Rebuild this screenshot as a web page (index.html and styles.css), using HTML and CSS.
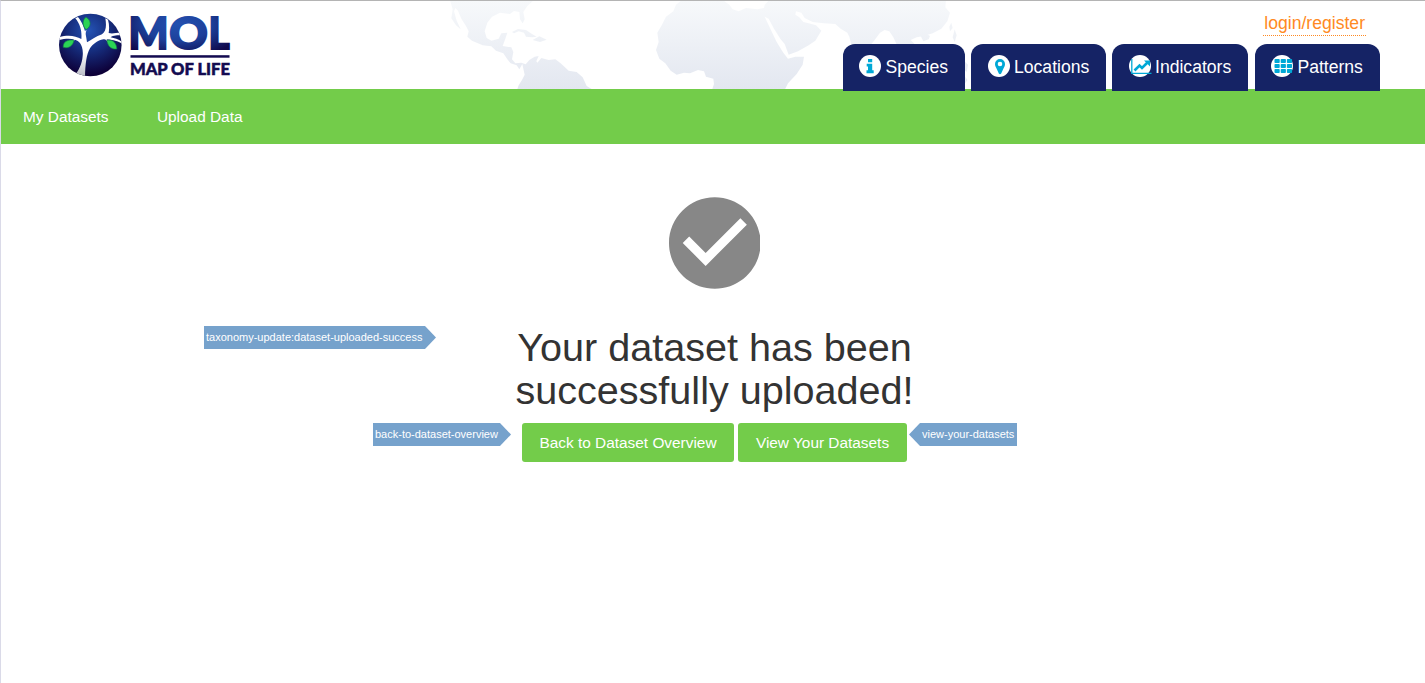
FILE: index.html
```html
<!DOCTYPE html>
<html lang="en">
<head>
<meta charset="utf-8">
<title>Map of Life</title>
<link rel="stylesheet" href="styles.css">
</head>
<body>
<div class="page">
  <header class="header">
    <svg class="world" viewBox="440 1 540 88" width="540" height="88" aria-hidden="true">
      <defs>
        <linearGradient id="land" gradientUnits="userSpaceOnUse" x1="0" y1="0" x2="0" y2="267">
          <stop offset="0" stop-color="#f7f9fb"/><stop offset="1" stop-color="#e3e7f0"/>
        </linearGradient>
      </defs>
      <g fill="url(#land)" transform="translate(440) scale(.33333)">
        <path d="M30 0L38 28 34 55 48 76 62 88 50 62 42 34 46 24 54 32 64 56 78 78 86 94 82 110 96 122 128 136 154 139 168 152 190 160 202 178 212 190 230 196 238 208 247 192 250 206 254 224 246 240 236 256 231 270H460L440 258 428 232 410 216 386 212 362 190 346 178 326 180 304 174 292 188 289 184 296 168 284 170 268 180 257 193 244 188 226 190 216 178 220 156 214 142 188 138 196 116 202 98 184 100 176 116 154 122 140 114 134 94 142 68 156 50 180 38 210 42 222 33 238 36 240 58 248 70 254 58 250 36 262 18 278 4V0Z"/>
        <path d="M216 96L234 87 258 90 276 102 290 110 276 112 258 110 252 98 236 94 222 100ZM278 120L298 109 320 119 300 126Z"/>
      </g>
      <g fill="url(#land)" transform="translate(640) scale(.33333)">
        <path d="M126 0L108 14 100 34 78 50 66 74 52 98 56 126 48 150 58 176 76 190 92 212 110 224 132 218 150 220 174 210 192 214 198 230 220 236 222 252 216 270H434L444 250 470 222 488 194 492 170 466 170 444 176 430 158 410 126 390 84 374 50 386 56 402 86 422 118 434 132 446 164 474 154 506 136 526 122 544 92 528 76 506 70 490 66 478 52 466 44 468 34 484 38 494 54 518 66 552 70 586 72 602 86 622 98 628 110 636 142H686L704 120 720 98 734 90 748 94 760 112 774 142 790 132 826 134 812 120 830 112 852 108 878 100 904 86 922 64 930 38 916 22 918 0H388L374 14 372 24 352 28 318 24 296 34 278 28 268 14 248 0Z"/>
        <path d="M842 108L856 100 870 108 866 118 850 124ZM934 68L938 84 930 94 928 80ZM944 88L950 106 944 126 938 112ZM948 142L958 162 950 176ZM972 182L984 194 980 216 972 208ZM976 230L982 240 976 250Z"/>
      </g>
    </svg>

    <a class="logo" href="#" aria-label="Map of Life">
      <svg viewBox="50 5 190 80" width="190" height="80">
        <defs>
          <radialGradient id="globe" cx="48%" cy="27%" r="70%">
            <stop offset="0" stop-color="#2453b4"/><stop offset=".45" stop-color="#162f80"/><stop offset="1" stop-color="#0d0038"/>
          </radialGradient>
          <radialGradient id="word" gradientUnits="userSpaceOnUse" cx="0" cy="0" r="1" gradientTransform="translate(178 24) scale(66 34)">
            <stop offset="0" stop-color="#2450b0"/><stop offset=".5" stop-color="#1c409a"/><stop offset="1" stop-color="#10094c"/>
          </radialGradient>
          <linearGradient id="trunk" gradientUnits="userSpaceOnUse" x1="0" y1="20" x2="0" y2="195">
            <stop offset="0" stop-color="#fff"/><stop offset=".6" stop-color="#fff"/><stop offset="1" stop-color="#b9bcc6"/>
          </linearGradient>
          <clipPath id="disc"><circle cx="90.3" cy="45" r="31.3"/></clipPath>
        </defs>
        <circle cx="90.3" cy="45" r="31.3" fill="url(#globe)"/>
        <g clip-path="url(#disc)">
          <g transform="translate(56 11) scale(.33333)">
            <path fill="url(#trunk)" d="M50 200C68 180 78 160 80 135C82 118 78 104 72 96C60 82 35 80 5 88V80C35 70 58 74 76 84C78 62 74 42 58 22L66 18C82 38 89 60 93 94C104 88 120 76 138 70C150 62 152 46 148 22L156 26C160 40 160 54 158 66C170 70 184 64 200 66V72C186 74 172 72 164 79C176 82 188 84 200 94V99C182 88 160 84 142 85C124 88 110 100 102 112C91 130 88 160 87 200Z"/>
            <path d="M90 58L84 76M60 84L48 90M144 82Q154 84 156 94" fill="none" stroke="#fff" stroke-width="3"/>
          </g>
        </g>
        <g fill="#2bd455" stroke="#118044" stroke-width=".6">
          <path d="M86 29.500C81.500 25 83 19 86 17.300C91.500 20 91.500 27 86 29.500Z"/>
          <path d="M63.200 47.300C63 42 67 39.500 74 40.200C73 46 68 49 63.200 47.300Z"/>
          <path d="M107 40.200C113 39.500 116.500 43 116.800 49C111 49.500 107.500 46 107 40.200Z"/>
        </g>
        <g class="logo-word" fill="url(#word)" stroke="url(#word)" stroke-width="2">
          <text x="128.500" y="48.600" textLength="40" lengthAdjust="spacingAndGlyphs">M</text>
          <text x="169.200" y="48.600" textLength="38.500" lengthAdjust="spacingAndGlyphs">O</text>
          <text x="208.500" y="48.600" textLength="21" lengthAdjust="spacingAndGlyphs">L</text>
        </g>
        <rect x="130.500" y="55.200" width="99" height="2.500" fill="#130b50"/>
        <text class="logo-sub" x="129.900" y="74.600" textLength="100" lengthAdjust="spacingAndGlyphs">MAP OF LIFE</text>
      </svg>
    </a>

    <div class="account">
      <a class="login" href="#">login/register</a>
      <nav class="tabs">
        <a class="tab species" href="#">
          <svg class="icon" viewBox="0 0 22 22"><circle cx="11" cy="11" r="11" fill="#fff"/><path fill="#00a8d6" d="M9 4h4.200v3.200H9ZM7.700 8.800H13.200v6.500h1.500V18.200h-7.200v-2.900H9V11.500H7.700Z"/></svg>
          <span>Species</span></a>
        <a class="tab locations" href="#">
          <svg class="icon" viewBox="0 0 22 22"><circle cx="11" cy="11" r="11" fill="#fff"/><path fill="#00a8d6" fill-rule="evenodd" d="M12 4A5 5 0 0 0 7 9C7 11 8 12.500 9 14.500L10.800 18.500Q12 20 13.200 18.500L15 14.500C16 12.500 17 11 17 9A5 5 0 0 0 12 4ZM12 6.700A2.300 2.300 0 1 1 12 11.300A2.300 2.300 0 1 1 12 6.700Z"/></svg>
          <span>Locations</span></a>
        <a class="tab indicators" href="#">
          <svg class="icon" viewBox="0 0 22 22"><circle cx="11" cy="11" r="11" fill="#fff"/><path d="M2.800 4V18.400H22.500" fill="none" stroke="#00a8d6" stroke-width="1.300"/><path d="M5.500 15.500L10.500 10.500 13 13 18.500 7.500" fill="none" stroke="#00a8d6" stroke-width="2.600"/><path fill="#00a8d6" d="M15 5.500H21V11.500Z"/></svg>
          <span>Indicators</span></a>
        <a class="tab patterns" href="#">
          <svg class="icon" viewBox="0 0 22 22"><circle cx="11" cy="11" r="11" fill="#fff"/><g fill="#00a8d6"><rect x="3.500" y="4" width="5.200" height="4" rx=".8"/><rect x="9.700" y="4" width="5.200" height="4" rx=".8"/><rect x="15.900" y="4" width="5.200" height="4" rx=".8"/><rect x="3.500" y="9" width="5.200" height="4" rx=".8"/><rect x="9.700" y="9" width="5.200" height="4" rx=".8"/><rect x="15.900" y="9" width="5.200" height="4" rx=".8"/><rect x="3.500" y="14" width="5.200" height="4" rx=".8"/><rect x="9.700" y="14" width="5.200" height="4" rx=".8"/><rect x="15.900" y="14" width="5.200" height="4" rx=".8"/></g></svg>
          <span>Patterns</span></a>
      </nav>
    </div>
  </header>

  <nav class="subnav">
    <a href="#">My Datasets</a>
    <a href="#">Upload Data</a>
  </nav>

  <main class="result">
    <svg class="check" viewBox="2 2 20 20"><path fill="#878787" d="M12 2C6.480 2 2 6.480 2 12s4.480 10 10 10 10-4.480 10-10S17.520 2 12 2zm-2 15l-5-5 1.410-1.410L10 14.170l7.590-7.590L19 8l-9 9z"/></svg>
    <div class="message">
      <h1>Your dataset has been<br>successfully uploaded!</h1>
      <span class="tag right tag-title">taxonomy-update:dataset-uploaded-success</span>
    </div>
    <div class="actions">
      <a class="button overview" href="#">Back to Dataset Overview</a>
      <a class="button datasets" href="#">View Your Datasets</a>
      <span class="tag right tag-overview">back-to-dataset-overview</span>
      <span class="tag left tag-datasets">view-your-datasets</span>
    </div>
  </main>
</div>
</body>
</html>
```
FILE: styles.css
```css
* { box-sizing: border-box; }

body {
  margin: 0;
  background: #fff;
  color: #333;
  font-family: "Liberation Sans", Arial, sans-serif;
  font-size: 15.4px;
}

a { color: inherit; text-decoration: none; }

.page {
  height: 683px;
  border-top: 1px solid #b4b4b4;
  border-left: 1px solid #dadae8;
  overflow: hidden;
}

.header {
  position: relative;
  display: flex;
  justify-content: space-between;
  height: 88px;
}

/* Decorative map behind the header */
.world { position: absolute; left: 439px; top: 0; }

.logo { position: relative; padding: 4px 0 0 49px; }
.logo svg { display: block; }
.logo-word { font: 900 44.500px Lato, sans-serif; }
.logo-sub { font: 900 16px Lato, sans-serif; fill: #130b50; stroke: #130b50; stroke-width: .5px; }

.account {
  position: relative;
  display: flex;
  flex-direction: column;
  align-items: flex-end;
  padding: 11px 45px 0 0;
}

.login {
  flex: none;
  height: 24px;
  margin-right: 14px;
  padding: 0 1px;
  border-bottom: 1px dotted #ff8a22;
  color: #ff8a22;
  font-size: 17.6px;
  line-height: 22px;
}

.tabs { display: flex; flex: none; gap: 6px; margin-top: 8px; }

.tab {
  display: flex;
  align-items: flex-start;
  gap: 4.4px;
  height: 47px;
  padding: 11px 0 0 16px;
  border-radius: 12px 12px 0 0;
  background: #152365;
  color: #fff;
  font-size: 17.6px;
  line-height: 24px;
}
.species { width: 122px; }
.locations { width: 135px; gap: 4px; padding-left: 17px; }
.indicators { width: 136px; gap: 4px; padding-left: 17px; }
.patterns { width: 125px; margin-left: 1px; }
.icon { flex: none; width: 22px; height: 22px; overflow: visible; }

.subnav {
  display: flex;
  gap: 48.4px;
  height: 55px;
  padding-left: 22px;
  background: #73cc4a;
  color: #fff;
  line-height: 56px;
}

.result {
  display: flex;
  flex-direction: column;
  align-items: center;
  padding-top: 53px;
}
.check { width: 91.600px; height: 92px; margin-left: 3.400px; }

.message { position: relative; width: 399px; margin-top: 37px; margin-left: 3px; }
h1 {
  margin: 0;
  font-size: 39.6px;
  font-weight: 400;
  line-height: 43px;
  text-align: center;
  white-space: nowrap;
}

.actions { position: relative; display: flex; gap: 4px; margin: 11px 0 0 3px; }
.button {
  height: 39px;
  border-radius: 3px;
  background: #73cc4a;
  color: #fff;
  line-height: 40px;
  text-align: center;
}
.overview { width: 212px; }
.datasets { width: 169px; }

/* Annotation labels pointing at the items beside them */
.tag {
  position: absolute;
  height: 23px;
  background: #76a2cc;
  color: #fff;
  font-size: 11px;
  line-height: 23px;
  white-space: nowrap;
}
.right { padding-left: 2px; clip-path: polygon(0 0, calc(100% - 11px) 0, 100% 50%, calc(100% - 11px) 100%, 0 100%); }
.left { padding-left: 13px; clip-path: polygon(11px 0, 100% 0, 100% 100%, 11px 100%, 0 50%); }
.tag-title { left: -311px; top: 0; width: 232px; }
.tag-overview { left: -149px; top: 0; width: 138px; }
.tag-datasets { left: 387px; top: 0; width: 108px; }
```
